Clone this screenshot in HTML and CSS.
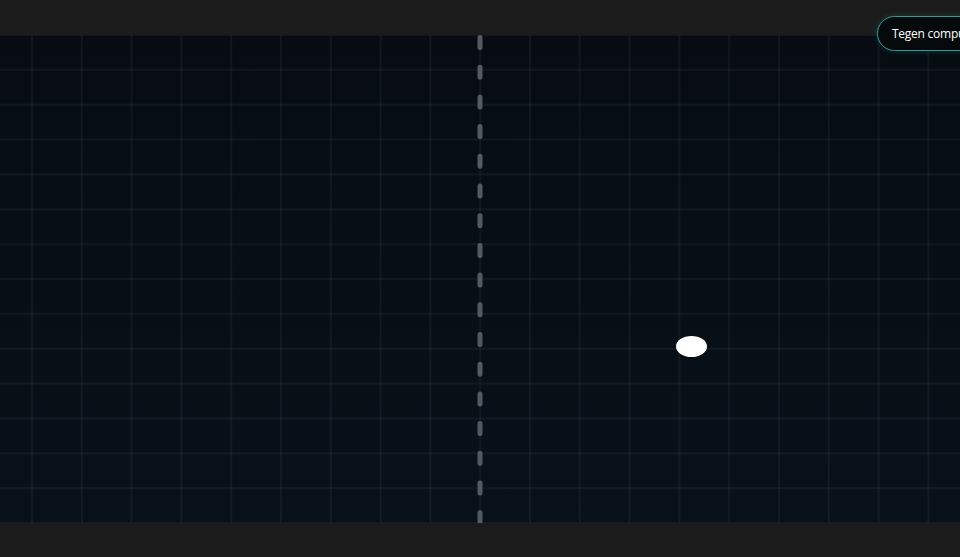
FILE: index.html
```html
<!DOCTYPE html>
<html lang="nl">
<head>
<meta charset="utf-8">
<title>Pong</title>
<link rel="stylesheet" href="styles.css">
</head>
<body>
<div class="page">
  <div class="top-bar"></div>
  <div class="field">
    <svg class="net" width="6" height="488" viewBox="0 0 6 488">
      <line x1="3" y1="2.5" x2="3" y2="492" stroke="#525a63" stroke-width="5" stroke-linecap="round" stroke-dasharray="10 19.7"/>
    </svg>
    <div class="ball"></div>
  </div>
  <div class="bottom-bar"></div>
  <button class="mode-btn">Tegen computer</button>
</div>
</body>
</html>
```
FILE: styles.css
```css
html, body {
  margin: 0;
  padding: 0;
  background: #1b1b1b;
  overflow: hidden;
}
.page {
  position: relative;
  width: 960px;
  height: 557px;
  display: flex;
  flex-direction: column;
  overflow: hidden;
}
.top-bar {
  height: 35px;
  background: #1b1b1b;
}
.bottom-bar {
  flex: 1;
  background: #1b1b1b;
}
.field {
  position: relative;
  height: 488px;
  background-color: #070e15;
  background-image:
    linear-gradient(to right, rgba(120,140,160,0.085) 2px, transparent 2px),
    linear-gradient(to bottom, rgba(120,140,160,0.085) 2px, transparent 2px),
    linear-gradient(to bottom, #060c12, #08111a);
  background-size: 49.8px 100%, 100% 34.86px, 100% 100%;
  background-position: 31px 0, 0 -1px, 0 0;
}
.net {
  position: absolute;
  left: 477px;
  top: 0;
}
.ball {
  position: absolute;
  left: 676px;
  top: 301px;
  width: 31px;
  height: 21px;
  border-radius: 50%;
  background: #ffffff;
}
.mode-btn {
  position: absolute;
  left: 877px;
  top: 16px;
  height: 35px;
  padding: 0 13px 0 14px;
  border: 1px solid #2e9e96;
  border-radius: 18px;
  background: #060a0d;
  color: #ffffff;
  font-family: "Open Sans", "Noto Sans", sans-serif;
  font-size: 12px;
  letter-spacing: -0.25px;
  white-space: nowrap;
  box-shadow: 0 0 6px rgba(46,158,150,0.25);
}
```
